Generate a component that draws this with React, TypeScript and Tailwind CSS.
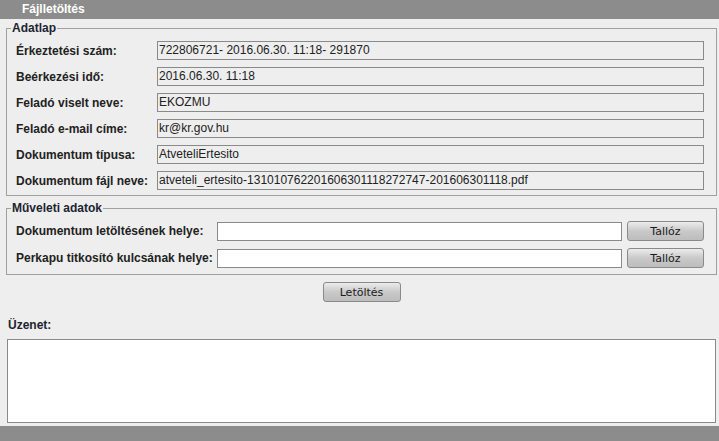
const adatlap = [
  ["Érkeztetési szám:", "722806721- 2016.06.30. 11:18- 291870"],
  ["Beérkezési idő:", "2016.06.30. 11:18"],
  ["Feladó viselt neve:", "EKOZMU"],
  ["Feladó e-mail címe:", "kr@kr.gov.hu"],
  ["Dokumentum típusa:", "AtveteliErtesito"],
  ["Dokumentum fájl neve:", "atveteli_ertesito-131010762201606301118272747-201606301118.pdf"],
]

const muveleti = ["Dokumentum letöltésének helye:", "Perkapu titkosító kulcsának helye:"]

function Gomb({ label, className }: { label: string; className?: string }) {
  return (
    <button
      className={
        "h-[20px] rounded-[3px] border border-[#8a8a8a] bg-linear-to-b from-[#ececec] via-[#c9c9c9] to-[#bdbdbd] font-['DejaVu_Sans',sans-serif] text-[11px] leading-none text-[#1a1a1a] " +
        (className ?? "")
      }
    >
      {label}
    </button>
  )
}

export default function App() {
  return (
    <div className="flex h-[441px] w-full flex-col bg-[#eeeeee] font-['Liberation_Sans',Arial,sans-serif] text-[12px] text-[#222]">
      <div className="h-[19px] shrink-0 bg-[#8c8c8c] pl-[22px] text-[12px] leading-[19px] font-bold text-white">
        Fájlletöltés
      </div>

      <div className="flex flex-1 flex-col pr-[2px] pl-[6px]">
        <fieldset className="mt-[2px] border border-[#a0a0a0] pr-[12px] pb-[5px] pl-[4px]">
          <legend className="px-[1px] text-[12px] leading-[15px] font-bold text-[#1c2430]">Adatlap</legend>
          <div className="mt-[5px] flex flex-col gap-[7px] pl-[5px]">
            {adatlap.map(([label, value]) => (
              <div key={label} className="flex items-center">
                <span className="w-[141px] shrink-0 font-bold">{label}</span>
                <div className="h-[19px] flex-1 border border-[#8a8a8a] pl-[1px] leading-[17px] whitespace-nowrap">
                  {value}
                </div>
              </div>
            ))}
          </div>
        </fieldset>

        <fieldset className="mt-[5px] border border-[#a0a0a0] pr-[12px] pb-[6px] pl-[4px]">
          <legend className="px-[1px] text-[12px] leading-[15px] font-bold text-[#1c2430]">Műveleti adatok</legend>
          <div className="mt-[5px] flex flex-col gap-[7px] pl-[5px]">
            {muveleti.map((label) => (
              <div key={label} className="flex items-center">
                <span className="w-[201px] shrink-0 font-bold">{label}</span>
                <input
                  readOnly
                  className="h-[19px] flex-1 border border-[#8a8a8a] bg-white outline-none"
                />
                <Gomb label="Tallóz" className="ml-[5px] w-[77px]" />
              </div>
            ))}
          </div>
        </fieldset>

        <div className="mt-[7px] flex justify-center">
          <Gomb label="Letöltés" className="w-[78px]" />
        </div>

        <div className="mt-[16px] pl-[2px] leading-[15px] font-bold text-[#1c2430]">Üzenet:</div>
        <textarea
          readOnly
          className="mx-[1px] mt-[6px] h-[84px] resize-none border border-[#8a8a8a] bg-white outline-none"
        />
      </div>

      <div className="h-[15px] shrink-0 bg-[#8c8c8c]" />
    </div>
  )
}
